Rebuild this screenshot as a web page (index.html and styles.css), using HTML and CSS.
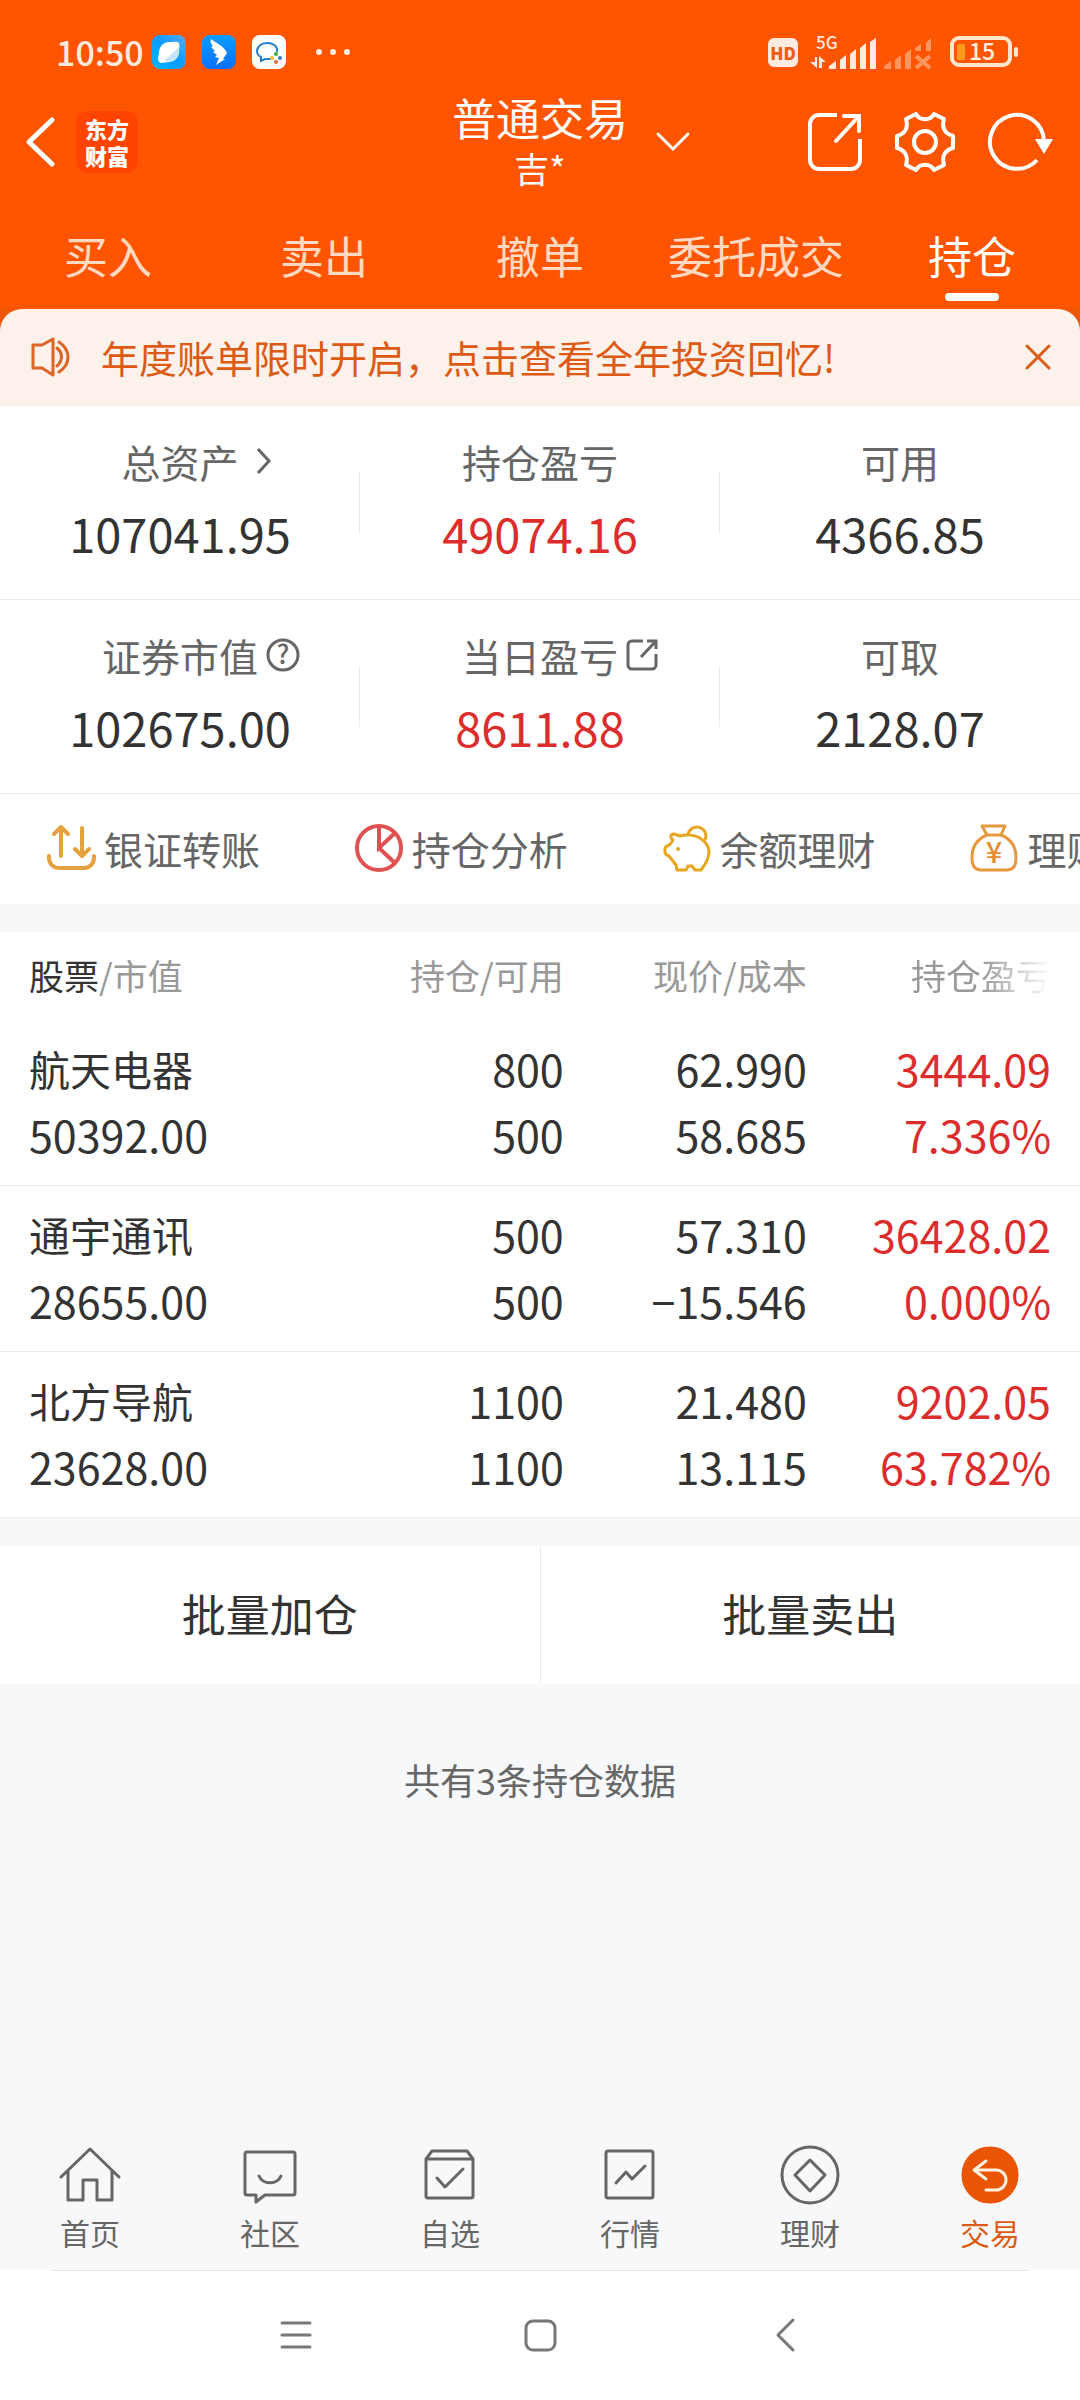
FILE: index.html
```html
<!DOCTYPE html>
<html lang="zh-CN">
<head>
    <meta charset="UTF-8">
    <meta name="viewport" content="width=device-width, initial-scale=1.0">
    <title>普通交易 - 持仓</title>
    <link rel="stylesheet" href="styles.css">
</head>
<body>
    <header class="header">
        <div class="status-bar">
            <span class="clock">10:50</span>
            <div class="status-apps">
                <svg width="34" height="34" viewBox="0 0 34 34">
                    <defs>
                        <linearGradient id="browserBg" x1="0" y1="1" x2="1" y2="0">
                            <stop offset="0" stop-color="#00b8ff"/>
                            <stop offset="0.5" stop-color="#0a9cff"/>
                            <stop offset="1" stop-color="#5aa8f8"/>
                        </linearGradient>
                    </defs>
                    <rect width="34" height="34" rx="8" fill="url(#browserBg)"/>
                    <path d="M7 27C5 24 7 20 7 17A10 10 0 0 1 17 7C21 7 25 6 27 8C28 11 27 14 27 17A10 10 0 0 1 17 27C13 27 9 29 7 27Z" fill="#fff"/>
                    <path d="M27 12C28 22 22 28 12 26Z" fill="#c5e3fb"/>
                </svg>
                <svg width="34" height="34" viewBox="0 0 34 34">
                    <defs>
                        <linearGradient id="wingBg" x1="0" y1="0" x2="0" y2="1">
                            <stop offset="0" stop-color="#0a9dff"/>
                            <stop offset="1" stop-color="#0a70fa"/>
                        </linearGradient>
                    </defs>
                    <rect width="34" height="34" rx="8" fill="url(#wingBg)"/>
                    <path d="M9 4C14 8 22 11 25 18L21 24H23L14 30L17 23L13 22L15 20L11 17L13 16L9 12L11 11C9 9 8 7 9 4Z" fill="#fff"/>
                </svg>
                <svg width="34" height="34" viewBox="0 0 34 34">
                    <rect width="34" height="34" rx="8" fill="#fff"/>
                    <path d="M25 17C26 11 21 8 15 8C9 8 5 12 5 16C5 19 7 21 9 22V26L13 24H19" fill="none" stroke="#2681c8" stroke-width="2"/>
                    <circle cx="24" cy="19" r="2" fill="#3fae49"/>
                    <circle cx="28" cy="23" r="2" fill="#2681c8"/>
                    <circle cx="24" cy="27" r="2" fill="#ea6b3a"/>
                    <circle cx="20" cy="23" r="2" fill="#f5c13b"/>
                </svg>
            </div>
            <svg class="status-more" width="34" height="8" viewBox="0 0 34 8" fill="#ffeadf">
                <circle cx="3" cy="4" r="3"/><circle cx="17" cy="4" r="3"/><circle cx="31" cy="4" r="3"/>
            </svg>
            <div class="status-right">
                <span class="hd-badge">HD</span>
                <svg width="66" height="36" viewBox="0 0 66 36" fill="#ffeadf">
                    <text x="6" y="15" font-size="17" font-weight="500">5G</text>
                    <path d="M5 23H7V34L0 28H5ZM9 34V22L16 28H12V34Z"/>
                    <path d="M19 32L26 27V35H19ZM30 26L36 21V35H30ZM40 20L46 15V35H40ZM50 14L56 9V35H50ZM60 8L66 4V35H60Z"/>
                </svg>
                <svg width="48" height="36" viewBox="0 0 48 36" fill="#ff9560">
                    <path d="M0 32L7 27V35H0ZM11 26L17 21V35H11ZM21 20L27 15V35H21ZM31 14L37 10V17H31ZM42 9L47 4V17H42Z"/>
                    <path d="M32 22L46 34M46 22L32 34" stroke="#ff9560" stroke-width="4"/>
                </svg>
                <svg class="battery" width="68" height="32" viewBox="0 0 68 32">
                    <rect x="2" y="2" width="58" height="27" rx="7" fill="none" stroke="#ffe6cc" stroke-width="4"/>
                    <rect x="64" y="11" width="4" height="10" rx="2" fill="#ffe6cc"/>
                    <rect x="7" y="8" width="8" height="16" rx="2" fill="#fb9d1c"/>
                    <text x="19" y="24" font-size="23" font-weight="500" fill="#fff0e0">15</text>
                </svg>
            </div>
        </div>

        <div class="title-bar">
            <div class="title-left">
                <button class="icon-button" aria-label="返回">
                    <svg width="30" height="50" viewBox="0 0 30 50" fill="none" stroke="#fff" stroke-width="5" stroke-linecap="round" stroke-linejoin="round">
                        <path d="M26 3L3 25L26 47"/>
                    </svg>
                </button>
                <a href="#" class="logo"><span>东方</span><span>财富</span></a>
            </div>
            <div class="title-text">
                <h1>普通交易</h1>
                <div class="account">吉*</div>
            </div>
            <div class="title-right">
                <button class="icon-button caret" aria-label="切换账户">
                    <svg width="34" height="20" viewBox="0 0 34 20" fill="none" stroke="#fff" stroke-width="3" stroke-linecap="round">
                        <path d="M2 2L17 17L32 2"/>
                    </svg>
                </button>
                <button class="icon-button" aria-label="分享">
                    <svg width="54" height="58" viewBox="0 0 54 58" fill="none" stroke="#fff" stroke-width="4">
                        <path d="M29 2H11A9 9 0 0 0 2 11V47A9 9 0 0 0 11 56H43A9 9 0 0 0 52 47V26"/>
                        <path d="M36 3H51V18M51 3L28 28" stroke-linecap="round"/>
                    </svg>
                </button>
                <button class="icon-button" aria-label="设置">
                    <svg width="60" height="60" viewBox="0 0 60 60" fill="none" stroke="#fff" stroke-width="4" stroke-linejoin="round">
                        <path d="M21 2C25 9 35 9 39 2L49 7C46 17 51 22 58 24V36C51 38 46 43 49 53L39 58C35 51 25 51 21 58L11 53C14 43 9 38 2 36V24C9 22 14 17 11 7Z"/>
                        <circle cx="30" cy="30" r="11"/>
                    </svg>
                </button>
                <button class="icon-button" aria-label="刷新">
                    <svg width="66" height="60" viewBox="0 0 66 60" fill="none" stroke="#fff" stroke-width="4">
                        <path d="M49 48A27 27 0 1 1 56 29"/>
                        <path d="M47 27H65L56 42Z" fill="#fff" stroke="none"/>
                    </svg>
                </button>
            </div>
        </div>

        <nav class="tabs">
            <a href="#">买入</a>
            <a href="#">卖出</a>
            <a href="#">撤单</a>
            <a href="#">委托成交</a>
            <a href="#" class="active">持仓</a>
        </nav>
    </header>

    <main class="main">
        <div class="notice-wrap">
            <div class="notice">
                <svg width="40" height="40" viewBox="0 0 40 40" fill="none" stroke="#dc6424" stroke-width="3" stroke-linejoin="round" stroke-linecap="round">
                    <path d="M2 8H11L22 2V38L11 31H2Z"/>
                    <path d="M26 11C32 16 32 23 26 29M28 5C40 13 40 27 28 35"/>
                </svg>
                <a href="#" class="notice-text">年度账单限时开启，点击查看全年投资回忆!</a>
                <button class="icon-button" aria-label="关闭">
                    <svg width="26" height="26" viewBox="0 0 26 26" stroke="#dc5a14" stroke-width="3" stroke-linecap="round">
                        <path d="M2 2L24 24M24 2L2 24"/>
                    </svg>
                </button>
            </div>
        </div>

        <section class="summary">
            <div class="summary-item">
                <div class="summary-label">
                    <span>总资产</span>
                    <svg class="chevron" width="14" height="28" viewBox="0 0 14 28" fill="none" stroke="#666" stroke-width="3">
                        <path d="M1 2L12 14L1 26"/>
                    </svg>
                </div>
                <div class="summary-value">107041.95</div>
            </div>
            <div class="summary-item">
                <div class="summary-label"><span>持仓盈亏</span></div>
                <div class="summary-value up">49074.16</div>
            </div>
            <div class="summary-item">
                <div class="summary-label"><span>可用</span></div>
                <div class="summary-value">4366.85</div>
            </div>
            <div class="summary-item">
                <div class="summary-label">
                    <span>证券市值</span>
                    <svg width="34" height="34" viewBox="0 0 34 34">
                        <circle cx="17" cy="17" r="15" fill="none" stroke="#666" stroke-width="3"/>
                        <text x="17" y="26" font-size="26" font-weight="500" text-anchor="middle" fill="#666">?</text>
                    </svg>
                </div>
                <div class="summary-value">102675.00</div>
            </div>
            <div class="summary-item">
                <div class="summary-label">
                    <span>当日盈亏</span>
                    <svg width="32" height="32" viewBox="0 0 32 32" fill="none" stroke="#666" stroke-width="3">
                        <path d="M17 2H6A4 4 0 0 0 2 6V26A4 4 0 0 0 6 30H26A4 4 0 0 0 30 26V15"/>
                        <path d="M21 2H30V10M30 2L15 18"/>
                    </svg>
                </div>
                <div class="summary-value up">8611.88</div>
            </div>
            <div class="summary-item">
                <div class="summary-label"><span>可取</span></div>
                <div class="summary-value">2128.07</div>
            </div>
        </section>

        <div class="shortcuts">
            <a href="#">
                <svg width="48" height="48" viewBox="0 0 48 48" fill="none" stroke="#e5a03f" stroke-width="4" stroke-linecap="round" stroke-linejoin="round">
                    <path d="M14 32V4M7 10L14 3L21 10M35 4V32M28 25L35 32L42 25"/>
                    <path d="M2 32V34A10 10 0 0 0 12 44H37A10 10 0 0 0 47 34V32"/>
                </svg>
                <span>银证转账</span>
            </a>
            <a href="#">
                <svg width="48" height="48" viewBox="0 0 48 48" fill="none" stroke="#e05252" stroke-width="4">
                    <circle cx="24" cy="24" r="22"/>
                    <path d="M24 2V24L40 9M24 24L40 39"/>
                </svg>
                <span>持仓分析</span>
            </a>
            <a href="#">
                <svg width="48" height="48" viewBox="0 0 48 48" fill="none" stroke="#e8a620" stroke-width="3" stroke-linejoin="round">
                    <path d="M25 11A9 9 0 1 1 42 16"/>
                    <path d="M2 24C2 22 7 22 8 19L10 16C7 14 7 10 11 10L17 12C23 10 32 11 37 14C43 18 46 23 46 28C46 35 42 41 38 46H32L29 42H25L23 46H14L13 41L6 32C3 31 2 30 2 28Z"/>
                    <circle cx="15" cy="25" r="2" fill="#e8a620" stroke="none"/>
                </svg>
                <span>余额理财</span>
            </a>
            <a href="#">
                <svg width="48" height="48" viewBox="0 0 48 48" fill="none" stroke="#e69a40" stroke-width="3" stroke-linejoin="round">
                    <path d="M12 2H35L31 11H17Z"/>
                    <path d="M17 11C7 15 2 23 2 34C2 42 5 46 11 46H37C43 46 46 42 46 34C46 23 41 15 31 11"/>
                    <text x="24" y="39" font-size="29" font-weight="500" text-anchor="middle" fill="#e88c30" stroke="none">¥</text>
                </svg>
                <span>理财</span>
            </a>
        </div>

        <table class="holdings">
            <thead>
                <tr>
                    <th><b>股票</b>/市值</th>
                    <th>持仓/可用</th>
                    <th>现价/成本</th>
                    <th><span class="fade">持仓盈亏</span></th>
                </tr>
            </thead>
            <tbody>
                <tr>
                    <td><div class="name">航天电器</div><div>50392.00</div></td>
                    <td><div>800</div><div>500</div></td>
                    <td><div>62.990</div><div>58.685</div></td>
                    <td class="up"><div>3444.09</div><div>7.336%</div></td>
                </tr>
                <tr>
                    <td><div class="name">通宇通讯</div><div>28655.00</div></td>
                    <td><div>500</div><div>500</div></td>
                    <td><div>57.310</div><div>−15.546</div></td>
                    <td class="up"><div>36428.02</div><div>0.000%</div></td>
                </tr>
                <tr>
                    <td><div class="name">北方导航</div><div>23628.00</div></td>
                    <td><div>1100</div><div>1100</div></td>
                    <td><div>21.480</div><div>13.115</div></td>
                    <td class="up"><div>9202.05</div><div>63.782%</div></td>
                </tr>
            </tbody>
        </table>

        <div class="batch">
            <button>批量加仓</button>
            <button>批量卖出</button>
        </div>

        <p class="total">共有3条持仓数据</p>
    </main>

    <nav class="nav-bar">
        <a href="#">
            <svg width="60" height="60" viewBox="0 0 60 60">
                <path d="M1 32L30 4L59 32M8 26V55H23V35H37V55H52V26"/>
            </svg>
            <span>首页</span>
        </a>
        <a href="#">
            <svg width="60" height="60" viewBox="0 0 60 60">
                <path d="M7 7H53A2 2 0 0 1 55 9V48A2 2 0 0 1 53 50H25L16 57V50H7A2 2 0 0 1 5 48V9A2 2 0 0 1 7 7Z"/>
                <path d="M19 31C23 40 37 40 41 31" stroke-width="3"/>
            </svg>
            <span>社区</span>
        </a>
        <a href="#">
            <svg width="60" height="60" viewBox="0 0 60 60">
                <path d="M6 14L12 6H47L53 14V51A2 2 0 0 1 51 53H8A2 2 0 0 1 6 51ZM6 14H53M17 33L25 42L43 24"/>
            </svg>
            <span>自选</span>
        </a>
        <a href="#">
            <svg width="60" height="60" viewBox="0 0 60 60">
                <rect x="6" y="6" width="47" height="47" rx="2"/>
                <path d="M16 38L26 27L32 34L45 21"/>
            </svg>
            <span>行情</span>
        </a>
        <a href="#">
            <svg width="60" height="60" viewBox="0 0 60 60">
                <circle cx="30" cy="30" r="28"/>
                <path d="M30 15L45 30L30 46L15 30Z"/>
            </svg>
            <span>理财</span>
        </a>
        <a href="#" class="active">
            <svg width="60" height="60" viewBox="0 0 60 60">
                <circle cx="30" cy="30" r="27" fill="#ea5504" stroke="#ea5504"/>
                <path d="M26 16L14 25L26 34M14 25H36A10 10 0 0 1 36 45H26" stroke="#fff0e0"/>
            </svg>
            <span>交易</span>
        </a>
    </nav>

    <div class="system-bar">
        <button class="icon-button" aria-label="最近任务">
            <svg width="32" height="34" viewBox="0 0 32 34"><path d="M2 4H30M2 16H30M2 28H30"/></svg>
        </button>
        <button class="icon-button" aria-label="主屏幕">
            <svg width="34" height="34" viewBox="0 0 34 34"><rect x="3" y="2" width="29" height="29" rx="7"/></svg>
        </button>
        <button class="icon-button" aria-label="返回">
            <svg width="20" height="34" viewBox="0 0 20 34"><path d="M19 1L4 16L19 31"/></svg>
        </button>
    </div>
</body>
</html>
```

FILE: styles.css
```css
* {
    box-sizing: border-box;
}

html, body {
    margin: 0;
    font-family: 'Noto Sans CJK SC', sans-serif;
    background-color: #fff;
    color: #333;
}

body {
    display: flex;
    flex-direction: column;
    min-height: 100vh;
    overflow-x: hidden;
}

a {
    color: inherit;
    text-decoration: none;
}

button {
    font-family: inherit;
    color: inherit;
    background: none;
    border: none;
    padding: 0;
    cursor: pointer;
}

svg {
    display: block;
    flex-shrink: 0;
    overflow: visible;
}

.icon-button {
    display: flex;
    align-items: center;
    justify-content: center;
}

.up {
    color: #dc2d2d;
}

/* Header */
.header {
    background-color: #ff5500;
    color: #fff;
}

.status-bar {
    display: flex;
    align-items: center;
    padding: 34px 62px 21px 56px;
    color: #ffeadf;
}

.clock {
    font-size: 34px;
    line-height: 36px;
    font-weight: 500;
}

.status-apps {
    display: flex;
    gap: 16px;
    margin-left: 8px;
}

.status-more {
    margin-left: 30px;
}

.status-right {
    display: flex;
    align-items: center;
    gap: 8px;
    margin-left: auto;
}

.hd-badge {
    width: 30px;
    margin-right: 4px;
    border-radius: 6px;
    background-color: #ffeadf;
    color: #ee5a14;
    font-size: 17px;
    line-height: 29px;
    font-weight: 900;
    text-align: center;
}

.battery {
    margin-left: 10px;
}

.title-bar {
    display: grid;
    grid-template-columns: 1fr auto 1fr;
    align-items: center;
    padding: 0 26px;
}

.title-left {
    display: flex;
    align-items: center;
    gap: 20px;
}

.logo {
    display: flex;
    flex-direction: column;
    justify-content: center;
    align-items: center;
    width: 62px;
    height: 62px;
    border-radius: 12px;
    background-color: #ff4400;
    font-size: 22px;
    line-height: 27px;
    font-weight: 900;
}

.title-text {
    text-align: center;
}

.title-text h1 {
    margin: 0;
    font-size: 44px;
    line-height: 52px;
    font-weight: 400;
}

.account {
    font-size: 35px;
    line-height: 50px;
}

.title-right {
    display: flex;
    align-items: center;
    justify-content: flex-end;
    gap: 33px;
}

.caret {
    margin-left: 28px;
    margin-right: auto;
}

.tabs {
    display: flex;
}

.tabs a {
    flex: 1;
    display: flex;
    flex-direction: column;
    align-items: center;
    gap: 8px;
    padding: 32px 0 8px;
    font-size: 44px;
    line-height: 60px;
    color: #ffd9c2;
}

.tabs a::after {
    content: '';
    width: 54px;
    height: 8px;
    border-radius: 4px;
}

.tabs .active {
    color: #fff;
}

.tabs .active::after {
    background-color: #fff;
}

/* Main */
.main {
    flex: 1;
    background-color: #f7f8fa;
}

.notice-wrap {
    background-color: #ee5505;
}

.notice {
    display: flex;
    align-items: center;
    gap: 30px;
    height: 96px;
    padding: 0 29px 0 31px;
    border-radius: 22px 22px 0 0;
    background-color: #fcf1eb;
    color: #dc5a14;
}

.notice-text {
    flex: 1;
    font-size: 38px;
    line-height: 46px;
    white-space: nowrap;
}

.summary {
    display: grid;
    grid-template-columns: repeat(3, 1fr);
    background-color: #fff;
    border-top: 1px solid #f0ece9;
}

.summary-item {
    padding: 32px 0 36px;
    border-bottom: 1px solid #ebebeb;
    background: linear-gradient(#ebebeb, #ebebeb) right center / 1px 61px no-repeat;
}

.summary-item:nth-child(3n) {
    background: none;
}

.summary-label {
    display: grid;
    grid-template-columns: 1fr auto 1fr;
    align-items: center;
    column-gap: 8px;
    margin-bottom: 19px;
    font-size: 39px;
    line-height: 46px;
    color: #666;
}

.summary-label span {
    grid-column: 2;
}

.chevron {
    margin-left: 10px;
}

.summary-value {
    font-size: 47px;
    line-height: 60px;
    text-align: center;
}

.shortcuts {
    display: flex;
    height: 110px;
    overflow: hidden;
    background-color: #fff;
}

.shortcuts a {
    flex: 0 0 28.5%;
    display: flex;
    align-items: center;
    gap: 9px;
    padding: 0 0 2px 47px;
    font-size: 39px;
    line-height: 46px;
    color: #666;
    white-space: nowrap;
}

/* Holdings table */
.holdings {
    width: 100%;
    margin: 28px 0;
    border-collapse: separate;
    border-spacing: 0;
    table-layout: fixed;
    background-color: #fff;
    text-align: right;
}

.holdings th {
    width: 22.5%;
    padding: 20px 0 22px;
    font-size: 35px;
    line-height: 46px;
    font-weight: 400;
    color: #999;
}

.holdings b {
    font-weight: 400;
    color: #333;
}

.holdings th:first-child {
    width: 29.7%;
}

.holdings th:last-child {
    width: auto;
}

.holdings td {
    padding: 15px 0 18px;
    border-bottom: 1px solid #ebebeb;
    font-size: 43px;
    line-height: 66px;
}

.holdings th:first-child, .holdings td:first-child {
    padding-left: 29px;
    text-align: left;
}

.holdings th:last-child, .holdings td:last-child {
    padding-right: 29px;
}

.holdings .name {
    font-size: 41px;
}

.fade {
    -webkit-mask-image: linear-gradient(to right, #000 50%, transparent);
    mask-image: linear-gradient(to right, #000 50%, transparent);
}

.batch {
    display: flex;
    background-color: #fff;
}

.batch button {
    flex: 1;
    padding: 37px 0 41px;
    font-size: 44px;
    line-height: 60px;
}

.batch button:first-child {
    border-right: 1px solid #ebebeb;
}

.total {
    margin: 0;
    padding: 72px 0;
    font-size: 36px;
    line-height: 46px;
    text-align: center;
    color: #666;
}

/* Bottom navigation */
.nav-bar {
    display: flex;
    background-color: #f8f8fa;
}

.nav-bar a {
    flex: 1;
    display: flex;
    flex-direction: column;
    align-items: center;
    gap: 7px;
    padding-bottom: 18px;
    font-size: 30px;
    line-height: 40px;
    color: #666;
}

.nav-bar svg {
    fill: none;
    stroke: #666;
    stroke-width: 3;
    stroke-linecap: round;
    stroke-linejoin: round;
}

.nav-bar .active {
    color: #dc5a14;
}

.system-bar {
    display: flex;
    justify-content: center;
    align-items: center;
    height: 130px;
    margin: 0 52px;
    border-top: 1px solid #e4e4e4;
}

.system-bar .icon-button {
    flex: 0 0 25%;
}

.system-bar svg {
    fill: none;
    stroke: #777;
    stroke-width: 3;
    stroke-linecap: round;
    stroke-linejoin: round;
}
```
